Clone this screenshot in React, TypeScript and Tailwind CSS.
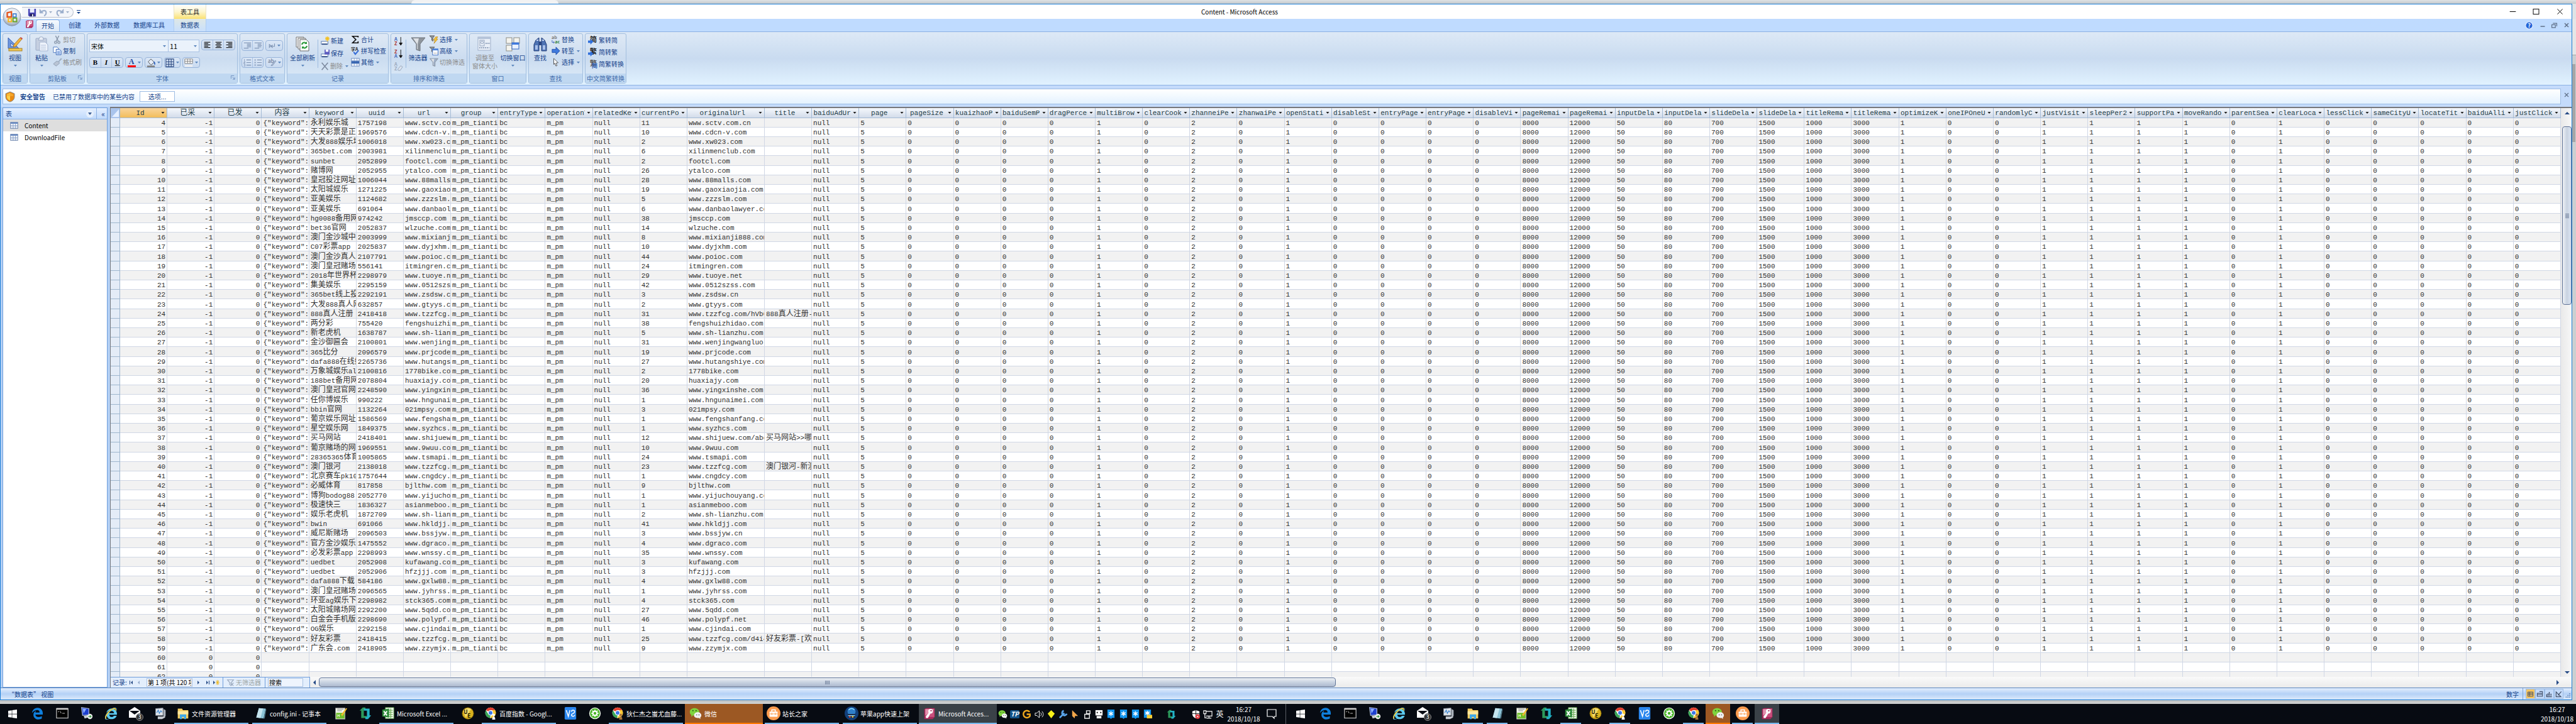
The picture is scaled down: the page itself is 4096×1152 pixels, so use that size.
import React from "react";
import { FaEdgeLegacy, FaInternetExplorer, FaWindows } from "react-icons/fa";

/* ---------- data ---------- */

type Row = [keyword: string, uuid: string, url: string, position: string, title?: string];

const rows: Row[] = [
  ["永利娱乐城", "1757198", "www.sctv.com.cn", "11"],
  ["天天彩票是正", "1969576", "www.cdcn-v.com", "10"],
  ["大发888娱乐场", "1006018", "www.xw023.com", "2"],
  ["365bet.com", "2003981", "xilinmenclub.com", "6"],
  ["sunbet", "2052899", "footcl.com", "2"],
  ["赌博网", "2052955", "ytalco.com", "26"],
  ["皇冠投注网址", "1006044", "www.88malls.com", "28"],
  ["太阳城娱乐", "1271225", "www.gaoxiaojia.com", "19"],
  ["亚美娱乐", "1124682", "www.zzzslm.com", "5"],
  ["亚美娱乐", "691064", "www.danbaolawyer.com", "6"],
  ["hg0088备用网", "974242", "jmsccp.com", "38"],
  ["bet36官网", "2052837", "wlzuche.com", "14"],
  ["澳门金沙城中", "2003999", "www.mixianji888.com", "8"],
  ["C07彩票app", "2025837", "www.dyjxhm.com", "10"],
  ["澳门金沙真人", "2107791", "www.poioc.com", "44"],
  ["澳门皇冠赌场", "556141", "itmingren.com", "24"],
  ["2018年世界杯", "2298979", "www.tuoye.net", "29"],
  ["集美娱乐", "2295159", "www.0512szss.com", "42"],
  ["365bet线上投", "2292191", "www.zsdsw.cn", "3"],
  ["大发888真人网", "632857", "www.gtyys.com", "2"],
  ["888真人注册", "2418418", "www.tzzfcg.com/hVbC", "31", "888真人注册-"],
  ["两分彩", "755420", "fengshuizhidao.com", "38"],
  ["新老虎机", "1638787", "www.sh-lianzhu.com", "5"],
  ["金沙御匾会", "2100801", "www.wenjingwangluo.", "31"],
  ["365比分", "2096579", "www.prjcode.com", "19"],
  ["dafa888在线娱", "2265736", "www.hutangshiye.com", "27"],
  ["万象城娱乐al", "2100816", "1778bike.com", "2"],
  ["188bet备用网", "2078804", "huaxiajy.com", "20"],
  ["澳门皇冠官网", "2248590", "www.yingxinshe.com", "36"],
  ["任你博娱乐", "990222", "www.hngunaimei.com", "1"],
  ["bbin官网", "1132264", "021mpsy.com", "3"],
  ["葡京娱乐网址", "1586569", "www.fengshanfang.co", "1"],
  ["星空娱乐网", "1849375", "www.syzhcs.com", "1"],
  ["买马网站", "2418401", "www.shijuew.com/abc", "12", "买马网站>>哪"],
  ["葡京赌场的网", "1969551", "www.9wuu.com", "10"],
  ["28365365体育", "1005865", "www.tsmapi.com", "24"],
  ["澳门银河", "2138018", "www.tzzfcg.com", "23", "澳门银河-新澳"],
  ["北京赛车pk10", "1757644", "www.cngdcy.com", "1"],
  ["必威体育", "817858", "bjlthw.com", "9"],
  ["博狗bodog88", "2052770", "www.yijuchouyang.co", "1"],
  ["极速快三", "1836327", "asianmeboo.com", "1"],
  ["娱乐老虎机", "1872709", "www.sh-lianzhu.com", "2"],
  ["bwin", "691066", "www.hkldjj.com", "41"],
  ["威尼斯赌场", "2096503", "www.bssjyw.cn", "3"],
  ["官方金沙娱乐", "1475552", "www.dgraco.com", "4"],
  ["必发彩票app", "2298993", "www.wnssy.com", "35"],
  ["uedbet", "2052908", "kufawang.com", "3"],
  ["uedbet", "2052906", "hfzjjj.com", "3"],
  ["dafa888下载", "584186", "www.gxlw88.com", "4"],
  ["澳门皇冠赌场", "2096565", "www.jyhrss.com", "1"],
  ["环亚ag娱乐下", "2298982", "stck365.com", "4"],
  ["太阳城赌场网", "2292200", "www.5qdd.com", "27"],
  ["白金会手机版", "2298690", "www.polypf.net", "46"],
  ["OG娱乐", "2292158", "www.cjindai.com", "1"],
  ["好友彩票", "2418415", "www.tzzfcg.com/d4i4", "25", "好友彩票-[欢"],
  ["广东会.com", "2418905", "www.zzymjx.com", "9"],
];

const headers = [
  "Id", "已采", "已发", "内容", "keyword", "uuid", "url", "group", "entryType", "operationT", "relatedKey", "currentPo",
  "originalUrl", "title", "baiduAdUr", "page", "pageSize", "kuaizhaoP", "baiduSemP", "dragPercen", "multiBrow",
  "clearCook", "zhanneiPer", "zhanwaiPe", "openStati", "disableSt", "entryPage", "entryPageR", "disableVi",
  "pageRemai", "pageRemai", "inputDela", "inputDela", "slideDela", "slideDela", "titleRema", "titleRema",
  "optimizeK", "oneIPOneU", "randomlyC", "justVisit", "sleepPer2", "supportPa", "moveRando", "parentSea",
  "clearLoca", "lessClick", "sameCityU", "locateTit", "baiduAlli", "justClick",
];

const settings = [
  "null", "5", "0", "0", "0", "0", "1", "0", "2", "0", "1", "0", "0", "0", "0", "8000", "12000", "50", "80", "700",
  "1500", "1000", "3000", "1", "0", "0", "1", "1", "1", "1", "0", "1", "0", "0", "0", "0", "0",
];

const FIRST_ID = 4;
const URL_PREVIEW = 11;

const grid: string[][] = [
  ...rows.map(([keyword, uuid, url, position, title], i) => [
    String(FIRST_ID + i), "-1", "0", '{"keyword":', keyword, uuid, url.slice(0, URL_PREVIEW), "m_pm_tianti", "bc", "m_pm",
    "null", position, url, title ?? "", ...settings,
  ]),
  ...[60, 61, 62].map((id) => [String(id), "0", "0", ...Array(headers.length - 3).fill("")]),
];

/* ---------- small helpers ---------- */

function Mixed({ text }: { text: string }) {
  return (
    <>
      {text.split(/([\u2e80-\uffff]+)/).map((part, i) =>
        i % 2 ? (
          <span key={i} className="text-[12px]">{part}</span>
        ) : (
          part
        ),
      )}
    </>
  );
}

type SvgProps = { size?: number; box?: number; children: React.ReactNode };
const Svg = ({ size = 14, box = 16, children }: SvgProps) => (
  <svg width={size} height={size} viewBox={`0 0 ${box} ${box}`} fill="none" className="shrink-0 overflow-visible" aria-hidden="true">
    {children}
  </svg>
);

const Caret = ({ dim = false }: { dim?: boolean }) => (
  <svg width="5" height="3" viewBox="0 0 5 3" className="shrink-0" aria-hidden="true">
    <path d="M0 0h5L2.5 3z" fill={dim ? "#9fb0c8" : "#5b86bd"} />
  </svg>
);

/* ---------- title bar ---------- */

const OfficeOrb = () => (
  <svg width="30" height="30" viewBox="0 0 36 36" aria-hidden="true">
    <defs>
      <radialGradient id="orb" cx="50%" cy="35%" r="65%">
        <stop offset="0" stopColor="#ffffff" />
        <stop offset=".6" stopColor="#dfe4ec" />
        <stop offset="1" stopColor="#8d9bb0" />
      </radialGradient>
    </defs>
    <circle cx="18" cy="18" r="17" fill="url(#orb)" stroke="#8796ab" />
    <path d="M9 10l8-2v10H9z" fill="none" stroke="#e3541b" strokeWidth="2.8" />
    <rect x="20" y="12" width="6" height="6" fill="none" stroke="#3f7fd0" strokeWidth="2" />
    <rect x="11" y="21" width="6" height="6" fill="none" stroke="#f5b51d" strokeWidth="2.4" />
    <path d="M20 20h7v7h-7z" fill="none" stroke="#6aa52c" strokeWidth="2.4" />
  </svg>
);

const SaveIcon = () => (
  <Svg>
    <path d="M1 1h14v14H3l-2-2z" fill="#4a49b8" />
    <rect x="4" y="1" width="8" height="7" fill="#e8ecfb" />
    <rect x="4" y="10" width="8" height="5" fill="#23225f" />
    <rect x="8" y="11" width="2" height="4" fill="#fff" />
  </Svg>
);

const UndoIcon = ({ flip = false }: { flip?: boolean }) => (
  <Svg size={13}>
    <g transform={flip ? "matrix(-1 0 0 1 16 0)" : undefined}>
      <path d="M5 7c5-4 9-2 9 2 0 3-2 5-4 6" stroke="#9db0cd" strokeWidth="2.6" />
      <path d="M1 1v9h8z" fill="#9db0cd" />
    </g>
  </Svg>
);

function TitleBar() {
  return (
    <header className="relative z-10 flex h-6 items-stretch border-t border-[#1a7dd6] bg-white">
      <div className="flex w-[275px] items-start pl-[3px]">
        <button aria-label="Office" className="h-[18px] w-[31px] pt-[5px]">
          <OfficeOrb />
        </button>
        <div className="mt-1 flex h-[17px] w-[82px] items-center rounded-r-full border border-l-0 border-[#b5bccb] bg-[#f4f6fa] pl-[9px]">
          <button aria-label="保存"><SaveIcon /></button>
          <button aria-label="撤消" className="ml-1"><UndoIcon /></button>
          <span className="ml-[3px]"><Caret dim /></span>
          <button aria-label="恢复" className="ml-[6px]"><UndoIcon flip /></button>
          <span className="ml-[3px]"><Caret dim /></span>
        </div>
        <button aria-label="自定义快速访问工具栏" className="mt-[9px] ml-[5px]">
          <svg width="6" height="6" viewBox="0 0 6 6"><path d="M0 0h6v1H0zM0 3h6L3 6z" fill="#15428b" /></svg>
        </button>
      </div>
      <div className="flex w-[52px] justify-center border-x border-[#e9e3c8] bg-linear-to-b from-white via-[#fdf6cf] to-[#fbe16f] pt-[5px] text-[10px] leading-[14px] text-[#222]">
        表工具
      </div>
      <h1 className="flex-1 pt-[5px] pr-[363px] text-center text-[10px] leading-[14px] text-black">Content - Microsoft Access</h1>
      <div className="flex w-28 items-center text-black">
        <button aria-label="最小化" className="flex flex-1 justify-center"><Svg size={11}><path d="M1 8h14" stroke="#000" strokeWidth="1.4" /></Svg></button>
        <button aria-label="最大化" className="flex flex-1 justify-center"><Svg size={11}><rect x="1.5" y="2" width="13" height="12" stroke="#000" strokeWidth="1.4" /></Svg></button>
        <button aria-label="关闭" className="flex flex-1 justify-center"><Svg size={11}><path d="M2 2l12 12M14 2L2 14" stroke="#000" strokeWidth="1.4" /></Svg></button>
      </div>
    </header>
  );
}

const AccessKey = ({ size = 14 }: { size?: number }) => (
  <Svg size={size} box={24}>
    <path d="M2 4l4-2h16v17l-4 4H2z" fill="#a8285a" />
    <path d="M4 4h17v15H4z" fill="#c9507d" />
    <path d="M4 4h17L4 16z" fill="#e391ae" />
    <circle cx="14" cy="8" r="4.4" fill="#fff" />
    <circle cx="15" cy="7" r="1.4" fill="#a8285a" />
    <path d="M11 10l3 2-5 9H5v-3z" fill="#fff" />
  </Svg>
);

function RibbonTabs() {
  const tabs = [
    { name: "创建", width: "w-10" },
    { name: "外部数据", width: "w-[62px]" },
    { name: "数据库工具", width: "w-[72px]" },
  ];
  return (
    <nav className="flex h-5 items-stretch bg-[#bfdbff] text-[10px] leading-[18px] text-[#15428b]">
      <div className="flex w-[275px] items-stretch">
        <span className="ml-[39px] flex w-[17px] items-start pt-px"><AccessKey /></span>
        <button className="mt-px w-[38px] rounded-t border border-b-0 border-[#8db2e3] bg-linear-to-b from-[#f5faff] to-[#dce8f6]">开始</button>
        <span className="w-1" />
        {tabs.map((t) => (
          <button key={t.name} className={`${t.width} whitespace-nowrap`}>{t.name}</button>
        ))}
      </div>
      <button className="w-[52px] border-x border-[#b0cdf0] bg-linear-to-b from-[#dfe8e6] to-[#c8dffc]">数据表</button>
      <div className="ml-auto flex w-[74px] items-center justify-between pr-1">
        <button aria-label="帮助"><Svg size={13}><circle cx="8" cy="8" r="7" fill="#2264d8" stroke="#dbe8ff" strokeWidth="1.6" /><text x="8" y="12" textAnchor="middle" fontSize="11" fontWeight="700" fill="#fff">?</text></Svg></button>
        <button aria-label="最小化文档"><Svg size={8}><path d="M1 12h14" stroke="#5f7088" strokeWidth="3" /></Svg></button>
        <button aria-label="还原文档"><Svg size={9}><path d="M4 2h11v8M1 6h10v8H1z" stroke="#5f7088" strokeWidth="2.2" /></Svg></button>
        <button aria-label="关闭文档"><Svg size={8}><path d="M2 2l12 12M14 2L2 14" stroke="#5f7088" strokeWidth="3" /></Svg></button>
      </div>
    </nav>
  );
}

/* ---------- ribbon ---------- */

function Group({ label, width, launcher, children }: { label: string; width: string; launcher?: boolean; children: React.ReactNode }) {
  return (
    <section className={`${width} flex shrink-0 flex-col rounded-[3px] border border-[#a3bfdf] bg-linear-to-b from-[#dfe9f5] via-[#cbdcf0] to-[#deecf8]`}>
      <div className="flex flex-1">{children}</div>
      <footer className="relative h-[15px] bg-[#c0d8f1] text-center text-[10px] leading-[15px] whitespace-nowrap text-[#3e6aaa]">
        {label}
        {launcher && (
          <button aria-label={`${label}选项`} className="absolute top-[3px] right-[3px]">
            <Svg size={7}><path d="M1 12V1h11M6 6l8 8M14 7v7H7" stroke="#6a8cbb" strokeWidth="2" /></Svg>
          </button>
        )}
      </footer>
    </section>
  );
}

function BigButton({ icon, label, second, caret, dim, width }: { icon: React.ReactNode; label: string; second?: string; caret?: boolean; dim?: boolean; width: string }) {
  return (
    <button className={`${width} flex shrink-0 flex-col items-center pt-1 text-[10px] leading-[13px] whitespace-nowrap ${dim ? "text-[#8d8d8d]" : "text-[#15428b]"}`}>
      <span className="flex h-[27px] items-start">{icon}</span>
      <span>{label}</span>
      {second && <span>{second}</span>}
      {caret && <span className="flex h-[13px] items-center"><Caret /></span>}
    </button>
  );
}

function SmallButton({ icon, label, caret, dim }: { icon: React.ReactNode; label: string; caret?: boolean; dim?: boolean }) {
  return (
    <button className={`flex items-center gap-0.5 text-[10px] leading-[14px] whitespace-nowrap ${dim ? "text-[#8d8d8d]" : "text-[#15428b]"}`}>
      {icon}
      <span>{label}</span>
      {caret && <span className="ml-0.5"><Caret /></span>}
    </button>
  );
}

const Stack = ({ children, tall = false, className = "" }: { children: React.ReactNode; tall?: boolean; className?: string }) => (
  <div className={`flex flex-col pt-0.5 ${tall ? "gap-[6px]" : "gap-1"} ${className}`}>{children}</div>
);

const Rule = () => <span className="my-[9px] w-px bg-[#9ebce0]" />;

const Frame = ({ children, width }: { children: React.ReactNode; width: string }) => (
  <div className={`${width} flex h-[17px] shrink-0 items-stretch divide-x divide-[#a9c2e4] rounded-sm border border-[#98b4da] bg-linear-to-b from-[#dbe7f6] to-[#c9daf0]`}>
    {children}
  </div>
);

const FrameButton = ({ name, caret, children }: { name: string; caret?: boolean; children: React.ReactNode }) => (
  <button aria-label={name} className="flex flex-1 items-center justify-center gap-[3px]">
    {children}
    {caret && <Caret />}
  </button>
);

const ViewIcon = () => (
  <Svg size={24} box={24}>
    <path d="M1 2v17h17z" fill="#6f97df" stroke="#3b62b4" />
    <path d="M5 10v6h6z" fill="#d5e2f8" stroke="#3b62b4" />
    <path d="M9 17l1-4L20 2l3 2-10 12z" fill="#f3b33c" stroke="#9a6a1c" strokeWidth=".8" />
    <path d="M20 2l1-1 3 2-1 2z" fill="#c94a4a" />
    <rect x="2" y="19" width="21" height="4" fill="#f0c955" stroke="#a7812a" />
  </Svg>
);
const PasteIcon = () => (
  <Svg size={24} box={24}>
    <rect x="3" y="3" width="17" height="19" rx="1" fill="#c5cfe0" stroke="#9dacc6" />
    <path d="M8 4a3 3 0 017 0v2H7z" fill="#e9eef6" stroke="#9dacc6" />
    <path d="M9 9h9l4 4v10H9z" fill="#eef3fb" stroke="#a5b5d1" />
    <path d="M11 14h8M11 17h8M11 20h8" stroke="#b2c1da" />
  </Svg>
);
const CutIcon = () => (
  <Svg><path d="M5 1l5 10M11 1L6 11" stroke="#8b99ac" strokeWidth="1.6" /><circle cx="5" cy="13" r="2" stroke="#8b99ac" strokeWidth="1.6" /><circle cx="11" cy="13" r="2" stroke="#8b99ac" strokeWidth="1.6" /></Svg>
);
const CopyIcon = () => (
  <Svg><path d="M1 1h7l2 2v8H1z" fill="#fff" stroke="#4070bd" /><path d="M6 5h6l3 3v7H6z" fill="#dce9ff" stroke="#2d5cae" /><path d="M8 9h5M8 11h5M8 13h5" stroke="#5482cb" /></Svg>
);
const BrushIcon = () => (
  <Svg><path d="M15 1l-5 6-3-1-6 5 5 4 6-5-1-3 5-5z" fill="#b9c4d4" stroke="#8c9bb0" /></Svg>
);
const Lines = ({ rows: r, color = "#111" }: { rows: [number, number][]; color?: string }) => (
  <Svg size={13}>
    {r.map(([x, w], i) => <rect key={i} x={x} y={2 + i * 2.6} width={w} height="1.4" fill={color} />)}
  </Svg>
);
const RefreshIcon = () => (
  <Svg size={24} box={24}>
    <path d="M2 1h12v16H2z" fill="#f2f2f2" stroke="#777" /><path d="M5 3h12v17H5z" fill="#f8f8f8" stroke="#777" />
    <path d="M8 5h10l4 4v14H8z" fill="#fff" stroke="#666" />
    <path d="M11 13a4 4 0 017-2M19 15a4 4 0 01-7 2" stroke="#2e9a3d" strokeWidth="2" />
    <path d="M19 8v4h-4zM11 20v-4h4z" fill="#2e9a3d" />
  </Svg>
);
const NewIcon = () => (
  <Svg><rect x="1" y="9" width="12" height="5" fill="#fff" stroke="#476aa8" /><rect x="2" y="13" width="10" height="2" fill="#27457f" /><path d="M12 0v9M8 4h8M9 1l6 6M15 1L9 7" stroke="#f2c021" strokeWidth="1.6" /></Svg>
);
const SaveRecIcon = () => (
  <Svg><rect x="1" y="9" width="12" height="5" fill="#fff" stroke="#476aa8" /><rect x="2" y="13" width="10" height="2" fill="#27457f" /><rect x="7" y="1" width="9" height="9" fill="#5d5cc0" /><rect x="9" y="1" width="5" height="4" fill="#fff" /></Svg>
);
const DeleteIcon = () => (
  <Svg size={13}><path d="M2 1l12 14M14 1L2 15" stroke="#7d8aa0" strokeWidth="2" /></Svg>
);
const SigmaIcon = () => (
  <Svg><path d="M13 4V2H3l6 6-6 6h10v-3" stroke="#111" strokeWidth="1.9" /></Svg>
);
const SpellIcon = () => (
  <Svg><text x="0" y="8" fontSize="8" fontWeight="700" fill="#222">字A</text><path d="M5 10l3 4 6-7" stroke="#3a6fd8" strokeWidth="2.4" /></Svg>
);
const MoreIcon = () => (
  <Svg><rect x="1" y="1" width="14" height="14" fill="#fff" stroke="#5d7fb8" /><path d="M1 5h14M1 11h14M6 1v14M11 1v14" stroke="#7d9ccd" /><rect x="1" y="6" width="14" height="4" fill="#2f5fae" /></Svg>
);
const letterColor = (c: string) => (c === "A" ? "#3a62b8" : "#a63030");
const SortIcon = ({ top, bottom }: { top: string; bottom: string }) => (
  <Svg size={15}>
    <text x="1" y="7" fontSize="8" fontWeight="700" fill={letterColor(top)}>{top}</text>
    <text x="1" y="15" fontSize="8" fontWeight="700" fill={letterColor(bottom)}>{bottom}</text>
    <path d="M12 1v12M9.5 11l2.5 4 2.5-4z" stroke="#111" fill="#111" />
  </Svg>
);
const ClearSortIcon = () => (
  <Svg size={15}>
    <text x="1" y="7" fontSize="8" fontWeight="700" fill="#9aa8bd">A</text>
    <text x="1" y="15" fontSize="8" fontWeight="700" fill="#9aa8bd">Z</text>
    <path d="M7 13l5-6 3 2-4 6H8z" fill="#dde5f0" stroke="#93a2b9" />
  </Svg>
);
const FunnelIcon = ({ size = 24, color = "#8f959c" }: { size?: number; color?: string }) => (
  <Svg size={size} box={24}>
    <path d="M1 2h22l-8 10v11l-6-2v-9z" fill={color} stroke="#6d737b" /><path d="M4 3h9l-2 9v9l-1-1v-8z" fill="#dfe2e6" />
  </Svg>
);
const SelectFilterIcon = () => (
  <Svg><path d="M0 1h9L6 5v6L4 9V5z" fill="#8f959c" stroke="#555" /><path d="M11 3l-4 6h3l-2 6 7-8h-3l3-4z" fill="#f8c63b" stroke="#b98312" strokeWidth=".8" /></Svg>
);
const AdvancedIcon = () => (
  <Svg><path d="M0 1h9L6 5v6L4 9V5z" fill="#8f959c" stroke="#555" /><rect x="5.5" y="4.5" width="10" height="11" fill="#fff" stroke="#3a6cc0" /><rect x="5" y="4" width="11" height="3" fill="#4d84dc" /><path d="M8 12h1M10.5 12h1M13 12h1" stroke="#333" /></Svg>
);
const FitFormIcon = () => (
  <Svg size={24} box={24}><rect x="1" y="1" width="20" height="21" fill="#e8eef7" stroke="#9fb0c9" /><rect x="1" y="1" width="20" height="3" fill="#b4c3d9" /><rect x="4" y="6" width="7" height="9" stroke="#93a4be" /><circle cx="7.5" cy="9.5" r="2" stroke="#93a4be" /><path d="M13 11h7M3 18h16" stroke="#93a4be" strokeWidth="2" strokeDasharray="2 1" /></Svg>
);
const SwitchIcon = () => (
  <Svg size={24} box={24}><g fill="#f5f4ee" stroke="#8c8c84"><rect x="1" y="2" width="9" height="9" /><rect x="13" y="2" width="9" height="9" /><rect x="1" y="14" width="9" height="9" /></g><rect x="10" y="10" width="11" height="10" fill="#e9f1ff" stroke="#2f62bd" /><rect x="10" y="10" width="11" height="3" fill="#3f79dd" /></Svg>
);
const FindIcon = () => (
  <Svg size={24} box={24}><path d="M5 6l5-4v21H2V13zM19 6l-5-4v21h8V13z" fill="#4d72b3" stroke="#27417a" /><path d="M10 8h4v6h-4z" fill="#2b4785" /><path d="M4 14h4v7H4zM16 14h4v7h-4z" fill="#a9c0ea" /><path d="M6 6h3M15 6h3" stroke="#c4d4f3" strokeWidth="2" /></Svg>
);
const ReplaceIcon = () => (
  <Svg><text x="0" y="7" fontSize="8" fontWeight="700" fill="#777">ab</text><text x="6" y="15" fontSize="8" fontWeight="700" fill="#2a7d32">ac</text><path d="M1 9v4h4M3.5 11L5 13l-1.500 2" stroke="#3a62b8" /></Svg>
);
const GotoIcon = () => <Svg><path d="M1 5h7V1l7 7-7 7v-4H1z" fill="#3f78dc" stroke="#1f4da3" /></Svg>;
const PointerIcon = () => <Svg><path d="M4 1l8 8-4 .5L10 14l-2 1-2-5-2 2z" fill="#fff" stroke="#444" /></Svg>;
const HanIcon = ({ char, arrow = true }: { char: string; arrow?: boolean }) => (
  <Svg size={15}>
    <text x="3" y="12" fontSize="12" fontWeight="700" fill={arrow ? "#222" : "#555"}>{char}</text>
    {arrow ? <path d="M0 9h4V6l5 5-5 5v-3H0z" fill="#2f6fdb" /> : <text x="6" y="15" fontSize="10" fontWeight="700" fill="#3766b7">简</text>}
  </Svg>
);

function Ribbon() {
  const gray = "#7e93b3";
  return (
    <div className="flex h-[86px] gap-[3px] border-y border-[#8db2e3] bg-linear-to-b from-[#dde9f6] via-[#c9dbf0] to-[#e1f2ff] py-0.5 pl-[3px]">
      <Group label="视图" width="w-10">
        <BigButton width="w-full" icon={<ViewIcon />} label="视图" caret />
      </Group>
      <Group label="剪贴板" width="w-[88px]" launcher>
        <BigButton width="w-9" icon={<PasteIcon />} label="粘贴" caret />
        <Stack>
          <SmallButton icon={<CutIcon />} label="剪切" dim />
          <SmallButton icon={<CopyIcon />} label="复制" />
          <SmallButton icon={<BrushIcon />} label="格式刷" dim />
        </Stack>
      </Group>
      <Group label="字体" width="w-60" launcher>
        <div className="flex w-full flex-col gap-2 pt-[9px] pl-[3px]">
          <div className="flex">
            <div className="relative flex items-center">
              <select aria-label="字体" className="h-5 w-[126px] appearance-none border border-[#a9c2e4] bg-[#eaf2fb] pl-0.5 text-[10px] text-black"><option>宋体</option></select>
              <span className="pointer-events-none absolute right-1"><Caret /></span>
            </div>
            <div className="relative flex items-center">
              <select aria-label="字号" className="h-5 w-[49px] appearance-none border border-l-0 border-[#a9c2e4] bg-[#eaf2fb] pl-0.5 text-[11px] text-black"><option>11</option></select>
              <span className="pointer-events-none absolute right-1"><Caret /></span>
            </div>
            <span className="w-[3px]" />
            <Frame width="w-[54px]">
              <FrameButton name="左对齐"><Lines rows={[[2, 12], [2, 8], [2, 12], [2, 8], [2, 12]]} /></FrameButton>
              <FrameButton name="居中"><Lines rows={[[2, 12], [4, 8], [2, 12], [4, 8], [2, 12]]} /></FrameButton>
              <FrameButton name="右对齐"><Lines rows={[[2, 12], [6, 8], [2, 12], [6, 8], [2, 12]]} /></FrameButton>
            </Frame>
          </div>
          <div className="flex gap-[3px] font-['Liberation_Serif',serif] text-[11px] text-black">
            <Frame width="w-[54px]">
              <FrameButton name="加粗"><b>B</b></FrameButton>
              <FrameButton name="倾斜"><b><i>I</i></b></FrameButton>
              <FrameButton name="下划线"><b><u>U</u></b></FrameButton>
            </Frame>
            <Frame width="w-7">
              <FrameButton name="字体颜色" caret><span className="h-[14px] w-[13px] border-b-3 border-[#f00] text-center text-[12px] leading-[11px] font-bold text-[#24489c]">A</span></FrameButton>
            </Frame>
            <Frame width="w-7">
              <FrameButton name="填充颜色" caret><Svg><path d="M3 6l5-5 6 6-6 5z" fill="#e6edf8" stroke="#444" /><path d="M13 6c2 1 2 3 2 5" stroke="#2f62bd" strokeWidth="2" /><rect x="1" y="13" width="14" height="3" fill="#808080" /></Svg></FrameButton>
            </Frame>
            <Frame width="w-[26px]">
              <FrameButton name="网格线" caret><Svg><path d="M1 1h14v14H1zM1 6h14M1 10.5h14M6 1v14M10.5 1v14" stroke="#27457f" strokeWidth="1.2" /></Svg></FrameButton>
            </Frame>
            <Frame width="w-7">
              <FrameButton name="备用填充颜色" caret><Svg><path d="M1 1h14v8H1z" fill="#fff" stroke="#777" /><path d="M1 5h14M6 1v8M10.5 1v8" stroke="#777" /><rect x="1" y="12" width="14" height="3" fill="#f2f2f2" /></Svg></FrameButton>
            </Frame>
          </div>
        </div>
      </Group>
      <Group label="格式文本" width="w-[72px]">
        <div className="flex flex-col gap-[10px] pt-[10px] pl-0.5">
          <div className="flex gap-[3px]">
            <Frame width="w-[35px]">
              <FrameButton name="减少缩进"><Lines rows={[[1, 14], [7, 8], [7, 8], [7, 8], [1, 9]]} color={gray} /></FrameButton>
              <FrameButton name="增加缩进"><Lines rows={[[1, 14], [7, 7], [7, 8], [7, 7], [1, 9]]} color={gray} /></FrameButton>
            </Frame>
            <Frame width="w-7"><FrameButton name="文字方向" caret><Svg size={12}><path d="M3 5v6l4-3zM14 3v6H8M10 6L7 9l3 3" stroke={gray} strokeWidth="1.5" /></Svg></FrameButton></Frame>
          </div>
          <div className="flex gap-[3px]">
            <Frame width="w-[35px]">
              <FrameButton name="编号"><Svg size={13}><path d="M6 3h9M6 8h9M6 13h9" stroke={gray} strokeWidth="1.4" /><path d="M2 1v4M1 6h2v2H1v2h2M1 11h2v4H1" stroke={gray} /></Svg></FrameButton>
              <FrameButton name="项目符号"><Svg size={13}><path d="M6 3h9M6 8h9M6 13h9" stroke={gray} strokeWidth="1.4" /><path d="M1 3h2M1 8h2M1 13h2" stroke={gray} strokeWidth="2.4" /></Svg></FrameButton>
            </Frame>
            <Frame width="w-7"><FrameButton name="突出显示" caret><Svg size={13}><text x="0" y="9" fontSize="10" fill="#5a6c8a">ab</text><path d="M6 14l8-10 2 1-7 9z" fill="#aebdd4" stroke={gray} /></Svg></FrameButton></Frame>
          </div>
        </div>
      </Group>
      <Group label="记录" width="w-[162px]">
        <BigButton width="w-12" icon={<RefreshIcon />} label="全部刷新" caret />
        <Rule />
        <Stack tall className="w-[49px] pt-1 pl-1">
          <SmallButton icon={<NewIcon />} label="新建" />
          <SmallButton icon={<SaveRecIcon />} label="保存" />
          <SmallButton icon={<DeleteIcon />} label="删除" dim caret />
        </Stack>
        <Stack className="pl-[3px]">
          <SmallButton icon={<SigmaIcon />} label="合计" />
          <SmallButton icon={<SpellIcon />} label="拼写检查" />
          <SmallButton icon={<MoreIcon />} label="其他" caret />
        </Stack>
      </Group>
      <Group label="排序和筛选" width="w-[122px]">
        <div className="flex w-[23px] flex-col items-center gap-[5px] pt-1">
          <button aria-label="升序"><SortIcon top="A" bottom="Z" /></button>
          <button aria-label="降序"><SortIcon top="Z" bottom="A" /></button>
          <button aria-label="清除所有排序"><ClearSortIcon /></button>
        </div>
        <Rule />
        <BigButton width="w-[37px]" icon={<FunnelIcon />} label="筛选器" />
        <Stack>
          <SmallButton icon={<SelectFilterIcon />} label="选择" caret />
          <SmallButton icon={<AdvancedIcon />} label="高级" caret />
          <SmallButton icon={<FunnelIcon size={14} color="#9fb0c9" />} label="切换筛选" dim />
        </Stack>
      </Group>
      <Group label="窗口" width="w-[91px]">
        <BigButton width="w-12" icon={<FitFormIcon />} label="调整至" second="窗体大小" dim />
        <BigButton width="w-[41px]" icon={<SwitchIcon />} label="切换窗口" caret />
      </Group>
      <Group label="查找" width="w-[87px]">
        <BigButton width="w-9" icon={<FindIcon />} label="查找" />
        <Stack>
          <SmallButton icon={<ReplaceIcon />} label="替换" />
          <SmallButton icon={<GotoIcon />} label="转至" caret />
          <SmallButton icon={<PointerIcon />} label="选择" caret />
        </Stack>
      </Group>
      <Group label="中文简繁转换" width="w-[66px]">
        <Stack className="pl-1">
          <SmallButton icon={<HanIcon char="简" />} label="繁转简" />
          <SmallButton icon={<HanIcon char="繁" />} label="简转繁" />
          <SmallButton icon={<HanIcon char="繁" arrow={false} />} label="简繁转换" />
        </Stack>
      </Group>
    </div>
  );
}

/* ---------- security message ---------- */

function MessageBar() {
  return (
    <div className="flex h-[34px] items-start bg-[#c4dbfb] pt-[5px] pl-[3px]">
      <div className="flex h-[25px] flex-1 items-center border border-[#9dbce4] bg-linear-to-b from-white to-[#e4f2ff] pl-[3px] text-[10px] text-[#15428b]">
        <Svg size={16}>
          <path d="M8 0l7 3v5c0 4-3 7-7 8-4-1-7-4-7-8V3z" fill="#e98a12" stroke="#8c8c8c" />
          <path d="M8 2v12C5 13 3 11 3 8V4z" fill="#fcd14a" />
          <path d="M3 4l5-2 5 2v3H3z" fill="#f9b233" opacity=".7" />
        </Svg>
        <b className="ml-2">安全警告</b>
        <span className="ml-3">已禁用了数据库中的某些内容</span>
        <button className="ml-2 h-[17px] w-14 border border-[#9dbce4] bg-white">选项...</button>
      </div>
      <button aria-label="关闭消息栏" className="flex h-5 w-[17px] items-center justify-center">
        <Svg size={8}><path d="M2 2l12 12M14 2L2 14" stroke="#5f7088" strokeWidth="2.4" /></Svg>
      </button>
    </div>
  );
}

/* ---------- navigation pane ---------- */

const TableIcon = () => (
  <Svg size={13}>
    <rect x="1" y="2" width="14" height="12" fill="#fff" stroke="#53709f" /><rect x="1" y="2" width="14" height="3" fill="#6f8fc4" />
    <path d="M1 8h14M1 11h14M6 5v9M10.5 5v9" stroke="#7a95c1" />
  </Svg>
);

function NavPane() {
  return (
    <aside className="flex w-[174px] shrink-0 flex-col bg-[#b4d0f5] pt-px pr-1 pl-[3px] text-[10px]">
      <div className="flex min-h-0 flex-1 flex-col border border-[#6f9ddb] bg-white">
        <header className="flex h-[18px] items-center border-b border-[#8db2e3] bg-linear-to-b from-[#e4efff] to-[#bfd9fb] pl-1 text-[#15428b]">
          <span className="flex-1">表</span>
          <button aria-label="筛选对象" className="flex h-3 w-3 items-center justify-center rounded-full bg-[#e6f0fd]">
            <svg width="6" height="4" viewBox="0 0 6 4"><path d="M0 0h6L3 4z" fill="#3b5e96" /></svg>
          </button>
          <span className="mx-1 h-full w-px bg-[#8db2e3]" />
          <button aria-label="折叠导航窗格" className="w-3 text-[12px] leading-[14px]">«</button>
        </header>
        <a href="#content" className="flex h-[19px] items-center gap-[10px] bg-[#dedede] pl-[11px] text-black"><TableIcon />Content</a>
        <a href="#download-file" className="flex h-[19px] items-center gap-[10px] pl-[11px] text-black"><TableIcon />DownloadFile</a>
      </div>
    </aside>
  );
}

/* ---------- datasheet ---------- */

function Datasheet() {
  return (
    <table className="w-full table-fixed border-separate border-spacing-0 font-['Liberation_Mono','Noto_Sans_CJK_SC',monospace] text-[11px] leading-[16px] text-[#2f2f2f]">
      <colgroup>
        <col className="w-[15px]" />
        {headers.map((h, i) => <col key={i} className={h === "originalUrl" ? "w-[123px]" : ""} />)}
      </colgroup>
      <thead>
        <tr className="h-4">
          <th className="border-r border-[#9eb6ce] bg-[#a9c4ec] p-0">
            <svg width="11" height="12" viewBox="0 0 11 12" className="ml-[2px]"><path d="M11 0v12H0z" fill="#e4efff" /></svg>
          </th>
          {headers.map((h, i) => (
            <th key={i} scope="col" className={`border-r border-b border-[#a4bbd6] p-0 font-normal text-[#1d3c47] ${i === 0 ? "bg-linear-to-b from-[#f9d49b] to-[#f2bd58]" : "bg-linear-to-b from-[#f5f8fc] to-[#d3dcea]"}`}>
              <div className="flex h-[15px] items-center pl-0.5">
                <div className="h-[15px] min-w-0 flex-1 overflow-hidden text-center whitespace-nowrap"><Mixed text={h} /></div>
                <svg width="12" height="3" viewBox="0 0 12 3" className="shrink-0"><path d="M3.5 0h5L6 3z" fill="#222" /></svg>
              </div>
            </th>
          ))}
        </tr>
      </thead>
      <tbody>
        {grid.map((cells, r) => (
          <tr key={r} className="odd:bg-[#f2f2f2] even:bg-white nth-[5n]:h-4">
            <td className="border-r border-b border-[#9eb6ce] bg-[#e4ecf7] p-0" />
            {cells.map((c, i) => (
              <td key={i} className="border-r border-b border-[#d0d7e5] p-0">
                <div className={`h-[14px] overflow-hidden whitespace-nowrap ${i < 3 ? "px-0.5 text-right" : "pl-0.5"}`}><Mixed text={c} /></div>
              </td>
            ))}
          </tr>
        ))}
      </tbody>
    </table>
  );
}

const Arrow = ({ d }: { d: string }) => (
  <svg width="8" height="8" viewBox="0 0 8 8" aria-hidden="true"><path d={d} fill="#274b86" /></svg>
);

function RecordBar() {
  return (
    <div className="flex h-[17px] shrink-0 items-stretch bg-[#f0f0f0]">
      <div className="flex w-[317px] shrink-0 items-center border-t border-r border-[#6f9ddb] bg-[#e3eefc] text-[10px] leading-[14px] whitespace-nowrap text-[#15428b]">
        <label htmlFor="record" className="ml-[3px] w-[26px]">记录:</label>
        <button aria-label="第一条记录"><Arrow d="M1 1h1v6H1zM6 1v6L3 4z" /></button>
        <button aria-label="上一条记录" className="ml-1 opacity-40"><Arrow d="M5 1v6L2 4z" /></button>
        <input id="record" readOnly defaultValue="第 1 项(共 120 项)" className="ml-2 h-[14px] w-[73px] border border-[#a9c2e4] bg-[#f4f8fe] px-px text-black" />
        <button aria-label="下一条记录" className="ml-[6px]"><Arrow d="M2 1v6l3-3z" /></button>
        <button aria-label="最后一条记录" className="ml-[6px]"><Arrow d="M2 1v6l3-3zM6 1h1v6H6z" /></button>
        <button aria-label="新记录" className="ml-[5px]"><svg width="10" height="8" viewBox="0 0 10 8"><path d="M0 1v6l3-3z" fill="#274b86" /><path d="M7 0v8M4 4h6M5 1l4 6M9 1L5 7" stroke="#efb81d" /></svg></button>
        <span className="ml-[5px] h-full w-px bg-[#6f9ddb]" />
        <span className="ml-[6px] flex w-[60px] items-center gap-[3px] text-[#a0a9a8]"><Svg size={11}><path d="M1 1h14l-5 6v7l-4-2V7zM8 8l7 7M15 8l-7 7" stroke="#9aa8bd" strokeWidth="1.6" /></Svg>无筛选器</span>
        <span className="h-full w-px bg-[#6f9ddb]" />
        <input aria-label="搜索" defaultValue="搜索" className="ml-1 h-[14px] w-14 border border-[#a9c2e4] bg-[#eef4fd] px-px text-black" />
      </div>
      <div className="flex flex-1 items-center bg-linear-to-b from-[#fafafa] to-[#ebebeb]">
        <button aria-label="向左滚动" className="flex w-[14px] justify-center"><Arrow d="M6 0v8L2 4z" /></button>
        <div className="flex h-[15px] flex-1">
          <div className="flex w-[45.5%] items-center justify-center gap-px rounded-sm border border-[#5f7397] bg-linear-to-b from-[#eef1f5] via-[#c9d3e1] to-[#aebbd0]">
            {[0, 1, 2, 3].map((i) => <span key={i} className="h-[6px] w-px bg-[#6f7f9b]" />)}
          </div>
        </div>
        <button aria-label="向右滚动" className="flex w-[14px] justify-center"><Arrow d="M2 0v8l4-4z" /></button>
        <span className="w-[15px]" />
      </div>
    </div>
  );
}

function SheetArea() {
  return (
    <main className="flex min-w-0 flex-1 flex-col border-t-2 border-l border-[#77787c] bg-white">
      <div className="flex min-h-0 flex-1">
        <div className="min-w-0 flex-1 overflow-hidden"><Datasheet /></div>
        <div className="flex w-[17px] shrink-0 flex-col items-stretch bg-linear-to-r from-[#e9e9e9] to-[#f7f7f7] pl-0.5">
          <button aria-label="向上滚动" className="flex h-4 items-center justify-center"><Arrow d="M0 6h8L4 2z" /></button>
          <div className="flex flex-1 flex-col pt-[13px]">
            <div className="flex h-[33%] flex-col items-center justify-center gap-px rounded-sm border border-[#5f7397] bg-linear-to-r from-[#eef1f5] via-[#c9d3e1] to-[#dbe4f2]">
              {[0, 1, 2, 3].map((i) => <span key={i} className="h-px w-[6px] bg-[#6f7f9b]" />)}
            </div>
          </div>
          <button aria-label="向下滚动" className="flex h-[14px] items-center justify-center"><Arrow d="M0 2h8L4 6z" /></button>
        </div>
      </div>
      <RecordBar />
    </main>
  );
}

function StatusBar() {
  const views: [string, React.ReactNode][] = [
    ["数据表视图", <path key="a" d="M2 3h12v10H2zM2 6h12M2 9h12M6 3v10" stroke="#44516a" strokeWidth="1.4" />],
    ["数据透视表视图", <path key="b" d="M2 6h12v7H2zM7 2h7v11M2 9h12" stroke="#44516a" strokeWidth="1.6" />],
    ["数据透视图视图", <path key="c" d="M2 8v6h12M5 12V6M8 12V3M12 12V7" stroke="#44516a" strokeWidth="2" />],
    ["设计视图", <path key="d" d="M2 3v11h11zM6 11l8-9" stroke="#44516a" strokeWidth="1.8" />],
  ];
  return (
    <footer className="flex h-5 shrink-0 items-center border-t border-b border-t-[#5a86bf] border-b-[#1a7dd6] bg-linear-to-b from-[#e3eefd] via-[#b4d1f6] to-[#dbe9fb] text-[10px] text-[#15428b]">
      <span className="ml-3 flex-1">“数据表” 视图</span>
      <span className="mr-[6px]">数字</span>
      <span className="mr-1 h-full w-px bg-[#7fa4d6]" />
      {views.map(([name, art], i) => (
        <button key={name} aria-label={name} className={`flex h-4 w-[15px] items-center justify-center border border-[#9dbce4] ${i === 0 ? "bg-[#fbc75c]" : "bg-[#c4dbfa]"}`}>
          <Svg size={11}>{art}</Svg>
        </button>
      ))}
      <span className="flex w-[13px] justify-end pt-1 pr-px"><Svg size={9}><path d="M11 3h3M11 8h3M11 13h3M6 8h3M6 13h3M1 13h3" stroke="#5f84ba" strokeWidth="2.5" /></Svg></span>
    </footer>
  );
}

/* ---------- taskbar ---------- */

const CmdIcon = () => <Svg size={20} box={24}><rect x="1" y="3" width="22" height="18" fill="#000" stroke="#b9b9b9" strokeWidth="1.5" /><rect x="1" y="2" width="22" height="3" fill="#cfcfcf" /><path d="M4 9h2M8 8l2 4M12 12h5" stroke="#ddd" /></Svg>;
const RemoteIcon = () => <Svg size={20} box={24}><path d="M2 1l14 2v12l-12 1z" fill="#1d3fd0" stroke="#a9b8d8" strokeWidth="1.5" /><path d="M4 3l7 1-5 8z" fill="#8fb2ff" /><path d="M6 17l9-2 3 4-10 3z" fill="#c9ced6" /><circle cx="18" cy="18" r="5" fill="#e9ece9" /><path d="M15 18h6M18 16l2 2-2 2" stroke="#3a9a44" strokeWidth="1.5" /></Svg>;
const IeIcon = () => (
  <span className="relative flex">
    <FaInternetExplorer size={19} color="#5ccaf0" />
    <svg width="19" height="19" viewBox="0 0 24 24" fill="none" className="absolute inset-0" aria-hidden="true"><path d="M2 22C-1 18 8 5 17 2c4-1 5 1 4 4" stroke="#f6c62c" strokeWidth="2" /></svg>
  </span>
);
const MailIcon = () => <Svg size={24} box={24}><path d="M1 8l9-6 9 6v11H1z" fill="#fff" /><path d="M2 8h16l-8 6z" fill="#0a0d14" /><circle cx="18" cy="18" r="5.5" fill="#333" stroke="#888" /><text x="18" y="21" textAnchor="middle" fontSize="9" fill="#fff">3</text></Svg>;
const PerfIcon = () => <Svg size={20} box={24}><path d="M3 3l14-1v14H3z" fill="#dfe3e8" stroke="#8f99a5" /><path d="M5 11l3-5 2 6 3-5 2 3" stroke="#3f87d0" strokeWidth="1.5" /><path d="M7 18h10l4-3v5l-6 3H7z" fill="#c3c8cf" /><path d="M18 4l4 2v11l-4 2z" fill="#a9b0b9" /></Svg>;
const FolderIcon = () => <Svg size={20} box={24}><path d="M2 3h8l2 3h10v16H2z" fill="#f6cf62" /><path d="M2 8h20v6H2z" fill="#fde9a0" /><path d="M6 14h12v9h-4v-4h-4v4H6z" fill="#3fa9e8" /></Svg>;
const NoteIcon = () => <Svg size={20} box={24}><path d="M8 2l13 1-4 19-14-2z" fill="#8cc3d6" /><path d="M8 2l8 1-5 18-8-1z" fill="#c4e4ee" /><path d="M17 22l4-19 1 2-3 17z" fill="#50788a" /></Svg>;
const NppIcon = () => <Svg size={20} box={24}><rect x="2" y="2" width="18" height="21" fill="#f3f7ec" stroke="#9a9a9a" /><rect x="3" y="11" width="16" height="11" fill="#6fbf2b" /><path d="M5 4h12M5 7h9" stroke="#999" strokeWidth="1.5" /><path d="M12 15L22 2l2 1-9 14z" fill="#f0b92e" /><path d="M6 14v5M9 14v5M6 16h3" stroke="#fff" /></Svg>;
const SyncIcon = ({ size = 20 }: { size?: number }) => <Svg size={size} box={24}><path d="M4 21V7H1l6-6v0h5v4H9v12h6v4z" fill="#2c9a5b" /><path d="M20 3v13h3l-6 7h-5v-4h3V7H9V3z" fill="#22b2c4" /></Svg>;
const ExcelIcon = () => <Svg size={20} box={24}><path d="M7 1h16v21H7z" fill="#f0f7ec" stroke="#5ea549" /><path d="M11 6h10M11 10h10M11 14h10M11 18h10M17 3v18" stroke="#74b35f" strokeWidth="1.5" /><path d="M1 5l13-2v17L1 18z" fill="#2f8c3b" /><path d="M4 8l6 8M10 8l-6 8" stroke="#fff" strokeWidth="2.2" /></Svg>;
const UeIcon = () => <Svg size={20} box={24}><circle cx="12" cy="12" r="11" fill="#d8b11e" stroke="#6b5406" /><path d="M3 8a10 10 0 0115-4L8 20z" fill="#f3dc6d" /><text x="4" y="13" fontSize="10" fontWeight="700" fill="#1a1503">U</text><text x="11" y="20" fontSize="10" fontWeight="700" fill="#1a1503">E</text></Svg>;
const ChromeIcon = ({ badge }: { badge: string }) => (
  <Svg size={20} box={24}>
    <circle cx="12" cy="11" r="10" fill="#fff" />
    <path d="M3.3 6A10 10 0 0120.700 6H12a5 5 0 00-4.300 2.500z" fill="#e2412f" />
    <path d="M3.3 6l4.400 7.500A5 5 0 0012 16l-1 5A10 10 0 013.300 6z" fill="#3aa757" />
    <path d="M20.7 6A10 10 0 0111 21l5.300-7.500A5 5 0 0016 8l-1-2z" fill="#fcc934" />
    <circle cx="12" cy="11" r="4.5" fill="#fff" /><circle cx="12" cy="11" r="3.6" fill="#3b78e7" />
    <circle cx="18" cy="15" r="2.5" fill={badge} /><path d="M15 24c0-8 6-8 6 0z" fill={badge} />
  </Svg>
);
const V2Icon = () => <Svg size={20} box={24}><rect x="1" y="0" width="22" height="24" rx="2" fill="#2a86ee" /><path d="M4 6l4 12 3-12M14 9c0-4 6-4 6 0s-6 3-6 6 6 4 6 0" stroke="#fff" strokeWidth="1.8" /></Svg>;
const GreenIcon = () => <Svg size={20} box={24}><circle cx="12" cy="12" r="11" fill="#f4fbf0" /><circle cx="12" cy="12" r="9.5" fill="#4db52c" /><circle cx="12" cy="12" r="4" stroke="#fff" strokeWidth="2.5" /><path d="M12 5v3M12 16v3M5 12h3M16 12h3M7 7l2 2M15 15l2 2M17 7l-2 2M7 17l2-2" stroke="#fff" strokeWidth="2" /></Svg>;
const WeChatIcon = ({ size = 20 }: { size?: number }) => <Svg size={size} box={24}><path d="M10 2c5 0 9 3 9 7s-4 7-9 7l-3 0-3 3v-4C2 14 1 12 1 9c0-4 4-7 9-7z" fill="#7ed33d" /><circle cx="7" cy="7" r="1.2" fill="#22541a" /><circle cx="13" cy="7" r="1.2" fill="#22541a" /><path d="M16 10c4 0 7 2.500 7 6 0 2-1 3-2 4v3l-2-2h-3c-4 0-7-2-7-5s3-6 7-6z" fill="#f0f0f0" /><circle cx="14" cy="15" r="1" fill="#555" /><circle cx="18.5" cy="15" r="1" fill="#555" /></Svg>;
const SiteIcon = () => <Svg size={22} box={24}><circle cx="12" cy="12" r="12" fill="#fb9c4f" /><rect x="5" y="9" width="14" height="9" rx="1" fill="#fff" /><path d="M9 9V6h6v3" stroke="#fff" strokeWidth="1.8" /><path d="M5 13h14M9 11v4M15 11v4" stroke="#fb9c4f" /></Svg>;
const AppleAppIcon = () => <Svg size={22} box={24}><circle cx="12" cy="12" r="12" fill="#123f7a" /><circle cx="12" cy="9" r="7" fill="#2f7fc9" /><path d="M5 13h14l-2 7H7z" fill="#1a2c4a" /><path d="M7 6c3-3 7-3 10 0M6 16h12" stroke="#8fe0ff" strokeWidth="1.5" /><circle cx="9" cy="18" r="1.5" fill="#e84a3a" /><circle cx="14" cy="18" r="1.5" fill="#f5c63a" /></Svg>;

type Task = { name: string; icon: React.ReactNode; open?: boolean; tone?: "alert" | "active"; label?: string };

const tasks: Task[] = [
  { name: "Edge", icon: <FaEdgeLegacy size={19} color="#0f7fdc" /> },
  { name: "命令提示符", icon: <CmdIcon /> },
  { name: "远程桌面", icon: <RemoteIcon /> },
  { name: "Internet Explorer", icon: <IeIcon /> },
  { name: "邮件", icon: <MailIcon /> },
  { name: "性能监视器", icon: <PerfIcon /> },
  { name: "资源管理器", icon: <FolderIcon />, open: true, label: "文件资源管理器" },
  { name: "记事本", icon: <NoteIcon />, open: true, label: "config.ini - 记事本" },
  { name: "Notepad++", icon: <NppIcon /> },
  { name: "同步", icon: <SyncIcon /> },
  { name: "Excel", icon: <ExcelIcon />, open: true, label: "Microsoft Excel ..." },
  { name: "UltraEdit", icon: <UeIcon /> },
  { name: "Chrome", icon: <ChromeIcon badge="#fff" />, open: true, label: "百度指数 - Googl..." },
  { name: "VNC", icon: <V2Icon /> },
  { name: "安全浏览", icon: <GreenIcon /> },
  { name: "Chrome 2", icon: <ChromeIcon badge="#a8743a" />, open: true, label: "狄仁杰之蚩尤血藤..." },
  { name: "微信", icon: <WeChatIcon />, open: true, tone: "alert", label: "微信" },
  { name: "站长", icon: <SiteIcon />, open: true, label: "站长之家" },
  { name: "苹果", icon: <AppleAppIcon />, open: true, label: "苹果app快速上架" },
  { name: "Access", icon: <AccessKey size={20} />, open: true, tone: "active", label: "Microsoft Acces..." },
];

function TaskButton({ task, labelled }: { task: Task; labelled: boolean }) {
  const wide = labelled && task.label;
  const bg = task.tone === "alert" ? "bg-[#9c5823]" : task.tone === "active" ? "bg-[#3a4147]" : "";
  const line = task.tone === "alert" ? "bg-[#ff7800]" : "bg-[#76b9ed]";
  const inset = task.tone ? "mx-0" : "mx-[3px]";
  return (
    <button aria-label={task.name} className={`${wide ? "w-[124px]" : "w-[39px]"} ${bg} flex shrink-0 flex-col`}>
      <span className={`flex flex-1 items-center gap-[3px] self-stretch text-[10px] whitespace-nowrap text-white ${wide ? "pl-[6px]" : "justify-center"}`}>
        <span className="flex w-[22px] shrink-0 justify-center">{task.icon}</span>
        {wide && <span>{task.label}</span>}
      </span>
      <span className={`h-0.5 ${inset} ${task.open ? line : ""} self-stretch`} />
    </button>
  );
}

const StartButton = () => (
  <button aria-label="开始菜单" className="flex w-10 shrink-0 items-center justify-center"><FaWindows size={16} color="#fff" /></button>
);

const Star = () => <Svg size={15}><path d="M2 0h12v14h-4l-2 2-2-2H2z" fill="#1296f0" /><path d="M8 3v8M4.500 5l7 4M11.500 5l-7 4" stroke="#fff" strokeWidth="1.6" /></Svg>;

const trayIcons: (React.ReactNode | null)[] = [
  <WeChatIcon key="w" size={15} />,
  <Svg key="tp" size={15}><rect x="0" y="1" width="16" height="14" rx="2" fill="#135389" /><text x="1" y="12" fontSize="11" fontWeight="700" fontStyle="italic" fill="#fff">TP</text></Svg>,
  <Svg key="g" size={15}><path d="M13 4a6 6 0 10.500 7V8H8" stroke="#f0a81c" strokeWidth="2.6" /></Svg>,
  <Svg key="v" size={15}><path d="M1 6h3l4-4v12l-4-4H1zM10 5c2 2 2 4 0 6M12.500 3c3 3 3 7 0 10" stroke="#fff" /></Svg>,
  <Svg key="d" size={15}><path d="M8 1l6 6-6 8-6-8z" fill="#f7f01a" /></Svg>,
  <Svg key="wr" size={15}><path d="M2 14l8-8M9 2a4 4 0 105 5" stroke="#5aa4ea" strokeWidth="3" /></Svg>,
  <Svg key="ar" size={15}><path d="M3 1l10 10-5 0-1 4-4-4z" fill="#f0a54a" /></Svg>,
  <Svg key="u" size={15}><path d="M7 2h6v5H7zM4 8h8v7H4z" stroke="#eee" strokeWidth="1.5" /></Svg>,
  <Svg key="q" size={15}><rect x="2" y="1" width="12" height="9" fill="#fff" /><rect x="4" y="11" width="8" height="4" fill="#fff" /><path d="M4 5h2M10 5h2" stroke="#111" strokeWidth="2" /></Svg>,
  <Star key="s1" />, <Star key="s2" />, <Star key="s3" />,
  <Svg key="s4" size={15}><path d="M2 0h12v14H2z" fill="#1296f0" /><path d="M8 2v8M4.500 4l7 4M11.500 4l-7 4" stroke="#fff" strokeWidth="1.6" /><rect x="7" y="9" width="9" height="6" fill="#f8ce36" /></Svg>,
  null,
  <SyncIcon key="sy" size={15} />,
  null,
  <Svg key="sh" size={15}><path d="M8 1l6 2v5c0 3-3 6-6 7-3-1-6-4-6-7V3z" fill="#fff" /><path d="M8 1v14M2 7h12" stroke="#111" /><circle cx="11" cy="12" r="4" fill="#e0353b" /><path d="M9.500 10.500l3 3M12.500 10.500l-3 3" stroke="#fff" /></Svg>,
  <Svg key="n" size={15}><path d="M5 3h10v8H5M10 11v3M6 14.500h8M1 2h4v5H1zM3 7v7h3" stroke="#fff" strokeWidth="1.2" /></Svg>,
  <span key="ime" className="text-[12px] leading-none text-white">英</span>,
];

const Clock = ({ width }: { width: string }) => (
  <div className={`${width} flex shrink-0 flex-col items-center justify-center text-[10px] leading-[15px] text-white`}>
    <time>16:27</time>
    <time>2018/10/18</time>
  </div>
);

function Taskbar() {
  return (
    <footer className="flex h-8 shrink-0 bg-[#070b12]">
      <div className="flex w-1/2 items-stretch">
        <StartButton />
        {tasks.map((t) => <TaskButton key={t.name} task={t} labelled />)}
        <div className="ml-auto grid min-w-0 flex-1 grid-cols-19 place-items-center">
          {trayIcons.map((icon, i) => <span key={i} className="flex items-center justify-center">{icon}</span>)}
        </div>
        <Clock width="w-[57px]" />
        <button aria-label="通知" className="flex w-8 items-center justify-center"><Svg size={16}><path d="M1 1h14v11h-3v3l-3-3H1z" stroke="#fff" strokeWidth="1.2" /></Svg></button>
        <span className="mr-[3px] ml-[6px] w-px bg-[#5a5e64]" />
      </div>
      <div className="flex w-1/2 items-stretch">
        <StartButton />
        {tasks.filter((t) => t.name !== "苹果").map((t) => <TaskButton key={t.name} task={t} labelled={false} />)}
        <span className="flex-1" />
        <Clock width="w-[60px]" />
      </div>
    </footer>
  );
}

/* ---------- page ---------- */

export default function App() {
  return (
    <div className="flex h-screen flex-col overflow-hidden bg-[#cfd4d6] font-['Noto_Sans_CJK_SC','Noto_Sans',sans-serif]">
      <div className="flex h-[6px] shrink-0 bg-linear-to-b from-[#dfe3e5] to-[#c3c8cb]">
        <span className="ml-[654px] w-[234px] rounded-t-lg bg-[#f1f2f3]" />
      </div>
      <div className="flex min-h-0 flex-1">
        <div className="flex min-w-0 flex-1 flex-col border-x border-[#1a7dd6] bg-[#c4dbfb]">
          <TitleBar />
          <RibbonTabs />
          <Ribbon />
          <MessageBar />
          <div className="flex min-h-0 flex-1">
            <NavPane />
            <SheetArea />
          </div>
          <StatusBar />
        </div>
        <div className="flex w-[6px] shrink-0 flex-col bg-[#cccfd0]">
          <span className="h-6 bg-[#dfe3e5]" />
          <span className="h-[58px] border-b border-[#a8a8a8] bg-[#e6e6e6]" />
          <span className="h-[14px]" />
          <span className="mr-px h-[124px] bg-[#a6a6a6]" />
        </div>
      </div>
      <div className="h-[6px] shrink-0 bg-linear-to-b from-[#b9bdbe] to-[#d3d5d5]" />
      <Taskbar />
    </div>
  );
}
